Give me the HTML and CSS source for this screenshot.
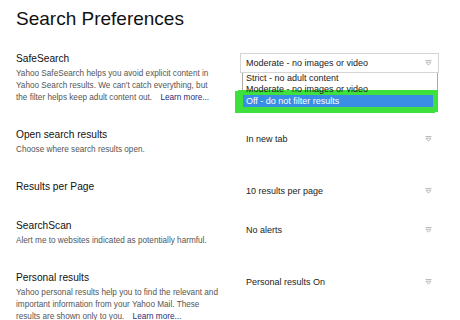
FILE: index.html
```html
<!DOCTYPE html>
<html lang="en">

<head>
    <meta charset="UTF-8" />
    <title>Search Preferences</title>
    <link rel="stylesheet" href="styles.css">
</head>

<body>
    <h1 class="page-title">Search Preferences</h1>

    <div class="pref-row">
        <div class="pref-info">
            <h2 class="pref-name">SafeSearch</h2>
            <p class="pref-desc">Yahoo SafeSearch helps you avoid explicit content in Yahoo Search results. We can't catch everything, but<br>the filter helps keep adult content out. <a class="learn-more" href="#">Learn more...</a></p>
        </div>
        <div class="pref-control">
            <div class="select select-open">
                <span>Moderate - no images or video</span>
                <svg class="arrow" width="7" height="6" viewBox="0 0 7 6"><path d="M0.5 0.5H6.5M1 2.2H6L3.5 5.2Z" fill="none" stroke="#aaa" stroke-width="0.8"/></svg>
            </div>
            <ul class="select-menu">
                <li>Strict - no adult content</li>
                <li>Moderate - no images or video</li>
                <li class="selected">Off - do not filter results</li>
            </ul>
        </div>
    </div>

    <div class="pref-row">
        <div class="pref-info">
            <h2 class="pref-name">Open search results</h2>
            <p class="pref-desc">Choose where search results open.</p>
        </div>
        <div class="pref-control">
            <div class="select">
                <span>In new tab</span>
                <svg class="arrow" width="7" height="6" viewBox="0 0 7 6"><path d="M0.5 0.5H6.5M1 2.2H6L3.5 5.2Z" fill="none" stroke="#aaa" stroke-width="0.8"/></svg>
            </div>
        </div>
    </div>

    <div class="pref-row pref-row-compact">
        <div class="pref-info">
            <h2 class="pref-name">Results per Page</h2>
        </div>
        <div class="pref-control">
            <div class="select">
                <span>10 results per page</span>
                <svg class="arrow" width="7" height="6" viewBox="0 0 7 6"><path d="M0.5 0.5H6.5M1 2.2H6L3.5 5.2Z" fill="none" stroke="#aaa" stroke-width="0.8"/></svg>
            </div>
        </div>
    </div>

    <div class="pref-row">
        <div class="pref-info">
            <h2 class="pref-name">SearchScan</h2>
            <p class="pref-desc">Alert me to websites indicated as potentially harmful.</p>
        </div>
        <div class="pref-control">
            <div class="select">
                <span>No alerts</span>
                <svg class="arrow" width="7" height="6" viewBox="0 0 7 6"><path d="M0.5 0.5H6.5M1 2.2H6L3.5 5.2Z" fill="none" stroke="#aaa" stroke-width="0.8"/></svg>
            </div>
        </div>
    </div>

    <div class="pref-row">
        <div class="pref-info">
            <h2 class="pref-name">Personal results</h2>
            <p class="pref-desc">Yahoo personal results help you to find the relevant and important information from your Yahoo Mail. These<br>results are shown only to you. <a class="learn-more" href="#">Learn more...</a></p>
        </div>
        <div class="pref-control">
            <div class="select">
                <span>Personal results On</span>
                <svg class="arrow" width="7" height="6" viewBox="0 0 7 6"><path d="M0.5 0.5H6.5M1 2.2H6L3.5 5.2Z" fill="none" stroke="#aaa" stroke-width="0.8"/></svg>
            </div>
        </div>
    </div>
</body>

</html>
```

FILE: styles.css
```css
* {
    margin: 0;
    padding: 0;
    box-sizing: border-box;
}

body {
    font-family: "Liberation Sans", Arial, sans-serif;
    color: #111;
    background: #fff;
    padding: 0 16px;
}

.page-title {
    font-size: 19px;
    font-weight: normal;
    line-height: 24px;
    padding-top: 7px;
    margin-bottom: 21px;
}

.pref-row {
    display: flex;
    align-items: flex-start;
    gap: 8px;
    margin-bottom: 24px;
}

.pref-row-compact {
    margin-bottom: 18px;
}

.pref-info {
    width: 216px;
}

.pref-name {
    font-size: 10.2px;
    font-weight: normal;
    line-height: 14px;
}

.pref-desc {
    font-size: 8.2px;
    line-height: 12px;
    color: #555;
    margin-top: 2px;
}

.learn-more {
    color: #2a2d7c;
    text-decoration: none;
    margin-left: 6px;
}

.pref-control {
    width: 199px;
    position: relative;
    margin-top: 1px;
}

.select {
    height: 20px;
    display: flex;
    align-items: center;
    justify-content: space-between;
    padding: 0 6px 0 5px;
    font-size: 9px;
    color: #222;
    border: 1px solid transparent;
}

.select-open {
    border-color: #d4d4d4;
}

.arrow {
    display: block;
}

.select-menu {
    position: absolute;
    top: 20px;
    left: 2px;
    right: 1px;
    list-style: none;
    background: #fff;
    border: 1px solid #aaa;
    border-top: none;
    font-size: 9px;
    color: #222;
}

.select-menu li {
    line-height: 11px;
    padding-left: 3px;
}

.select-menu .selected {
    line-height: 12px;
    margin-right: 4px;
    background: #3a8ee6;
    color: #fff;
    box-shadow: 0 0 0 5px #3de03d, -3px 1px 0 5px #3de03d;
}
```
